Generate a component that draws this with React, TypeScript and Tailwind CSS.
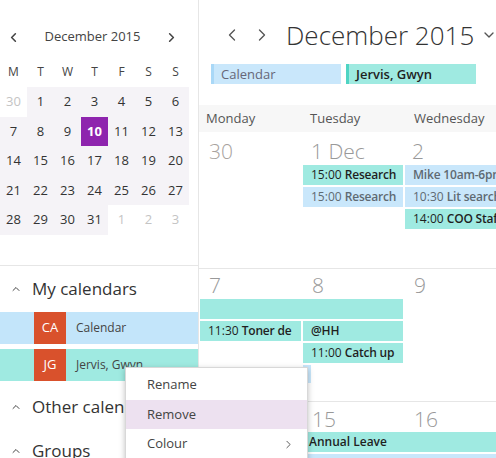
import { ChevronLeft, ChevronRight, ChevronUp, ChevronDown } from 'lucide-react';

const dayNames = ['M', 'T', 'W', 'T', 'F', 'S', 'S'];

// mini month grid: [label, inMonth]
const weeks: [string, boolean][][] = [
  [['30', false], ['1', true], ['2', true], ['3', true], ['4', true], ['5', true], ['6', true]],
  [['7', true], ['8', true], ['9', true], ['10', true], ['11', true], ['12', true], ['13', true]],
  [['14', true], ['15', true], ['16', true], ['17', true], ['18', true], ['19', true], ['20', true]],
  [['21', true], ['22', true], ['23', true], ['24', true], ['25', true], ['26', true], ['27', true]],
  [['28', true], ['29', true], ['30', true], ['31', true], ['1', false], ['2', false], ['3', false]],
];

function Ev({ time, title, kind }: { time?: string; title: string; kind: 'teal' | 'blue' }) {
  return (
    <div
      className={
        kind === 'teal'
          ? 'h-[20px] shrink-0 bg-[#9feae1] text-[#1f1f1f] text-[12px] leading-[20px] pl-[8px] whitespace-nowrap overflow-hidden'
          : 'h-[20px] shrink-0 bg-[#c9e7fb] text-[#5f6a72] text-[12px] leading-[20px] pl-[8px] whitespace-nowrap overflow-hidden'
      }
    >
      {time && <span>{time} </span>}
      <span className="font-semibold tracking-[-0.2px]">{title}</span>
    </div>
  );
}

function SectionHead({ label, h }: { label: string; h: string }) {
  return (
    <div className={`${h} shrink-0 flex items-center pl-[10px] text-[#333]`}>
      <ChevronUp size={12} strokeWidth={2} className="text-[#444]" />
      <span className="ml-[10px] text-[17px] whitespace-nowrap">{label}</span>
    </div>
  );
}

function CalRow({ initials, name, bg }: { initials: string; name: string; bg: string }) {
  return (
    <div className={`h-[32px] shrink-0 flex items-center ${bg}`}>
      <div className="ml-[34px] w-[32px] h-[32px] bg-[#d9512c] text-white text-[13px] flex items-center justify-center">
        {initials}
      </div>
      <span className="ml-[10px] text-[12px] text-[#444] whitespace-nowrap">{name}</span>
    </div>
  );
}

export default function App() {
  return (
    <div className="relative w-[496px] h-[458px] overflow-hidden bg-white flex font-['Open_Sans','Noto_Sans',sans-serif]">
      {/* left pane */}
      <div className="w-[199px] shrink-0 border-r border-[#e6e6e6] flex flex-col">
        <div className="mt-[27px] h-[20px] shrink-0 flex items-center justify-between pl-[6px] pr-[8px] text-[#444]">
          <ChevronLeft size={15} strokeWidth={2.5} />
          <span className="text-[13px] text-[#444]">December 2015</span>
          <ChevronRight size={15} strokeWidth={2.5} className="mr-[11px]" />
        </div>
        <div className="mt-[15px] h-[20px] shrink-0 grid grid-cols-[repeat(7,27px)] text-[12px] text-[#444]">
          {dayNames.map((d, i) => (
            <div key={i} className="flex items-center justify-center">{d}</div>
          ))}
        </div>
        <div className="mt-[5px] shrink-0 flex flex-col">
          {weeks.map((w, wi) => (
            <div key={wi} className="grid grid-cols-[repeat(7,27px)] h-[29.6px]">
              {w.map(([d, inMonth], di) => {
                const today = wi === 1 && di === 3;
                return (
                  <div
                    key={di}
                    className={
                      today
                        ? 'flex items-center justify-center bg-[#8e24ae] text-white font-bold text-[13px]'
                        : inMonth
                        ? 'flex items-center justify-center bg-[#f5f3f7] text-[#333] text-[13px]'
                        : 'flex items-center justify-center text-[#c4c4c4] text-[13px]'
                    }
                  >
                    {d}
                  </div>
                );
              })}
            </div>
          ))}
        </div>
        <div className="mt-[30px] shrink-0 border-t border-[#e6e6e6]" />
        <SectionHead label="My calendars" h="h-[46px]" />
        <CalRow initials="CA" name="Calendar" bg="bg-[#c3e5fa]" />
        <div className="h-[5px] shrink-0" />
        <CalRow initials="JG" name="Jervis, Gwyn" bg="bg-[#9feae1]" />
        <div className="h-[4px] shrink-0" />
        <SectionHead label="Other calendars" h="h-[44px]" />
        <SectionHead label="Groups" h="h-[44px]" />
      </div>

      {/* main pane */}
      <div className="flex-1 min-w-0 flex flex-col">
        <div className="mt-[15px] h-[40px] shrink-0 flex items-center text-[#555]">
          <ChevronLeft size={20} strokeWidth={1.6} className="ml-[23px] shrink-0" />
          <ChevronRight size={20} strokeWidth={1.6} className="ml-[10px] shrink-0" />
          <span className="ml-[14px] text-[26px] font-light text-[#333] whitespace-nowrap">December 2015</span>
          <ChevronDown size={16} strokeWidth={2} className="ml-[7px] shrink-0" />
        </div>
        <div className="mt-[9px] shrink-0 flex gap-[5px] pl-[12px]">
          <div className="w-[130px] h-[20px] shrink-0 bg-[#c9e7fb] border-l-[3px] border-[#a9d8f7] text-[13px] leading-[20px] pl-[7px] text-[#667]">
            Calendar
          </div>
          <div className="w-[130px] h-[20px] shrink-0 bg-[#9feae1] border-l-[3px] border-[#4fd4c3] text-[13px] leading-[20px] pl-[7px] text-[#1f1f1f] font-semibold">
            Jervis, Gwyn
          </div>
        </div>
        <div className="mt-[21px] h-[27px] shrink-0 bg-[#f7f7f7] grid grid-cols-[103px_102px_102px] text-[13px] text-[#555] items-center">
          <span className="pl-[7px]">Monday</span>
          <span className="pl-[8px]">Tuesday</span>
          <span className="pl-[10px] whitespace-nowrap">Wednesday</span>
        </div>

        {/* week 1 */}
        <div className="h-[136px] shrink-0 grid grid-cols-[101px_100px_100px] gap-x-[2px] pl-[1px]">
          <div>
            <div className="h-[33px] pl-[9px] pt-[6px] text-[21px] leading-[26px] font-light text-[#a8a29e]">30</div>
          </div>
          <div className="flex flex-col gap-[2px]">
            <div className="h-[31px] shrink-0 pl-[8px] pt-[6px] text-[21px] leading-[26px] font-light text-[#999]">1 Dec</div>
            <Ev time="15:00" title="Research" kind="teal" />
            <Ev time="15:00" title="Research" kind="blue" />
          </div>
          <div className="flex flex-col gap-[2px]">
            <div className="h-[31px] shrink-0 pl-[7px] pt-[6px] text-[21px] leading-[26px] font-light text-[#999]">2</div>
            <Ev title="Mike 10am-6pm" kind="blue" />
            <Ev time="10:30" title="Lit search" kind="blue" />
            <Ev time="14:00" title="COO Staff" kind="teal" />
          </div>
        </div>

        {/* week 2 */}
        <div className="h-[133px] shrink-0 border-t border-[#e6e6e6] pl-[1px] flex flex-col">
          <div className="h-[30px] shrink-0 grid grid-cols-[101px_100px_100px] gap-x-[2px] text-[21px] leading-[26px] font-light text-[#999]">
            <div className="pl-[9px] pt-[3px]">7</div>
            <div className="pl-[9px] pt-[3px]">8</div>
            <div className="pl-[9px] pt-[3px]">9</div>
          </div>
          <div className="w-[203px] h-[20px] shrink-0 bg-[#9feae1]" />
          <div className="mt-[2px] grid grid-cols-[101px_100px_100px] gap-x-[2px]">
            <div className="flex flex-col">
              <Ev time="11:30" title="Toner de" kind="teal" />
            </div>
            <div className="flex flex-col gap-[2px]">
              <Ev title="@HH" kind="teal" />
              <Ev time="11:00" title="Catch up" kind="teal" />
              <div className="w-[8px] h-[18px] bg-[#c9e7fb]" />
            </div>
          </div>
        </div>

        {/* week 3 */}
        <div className="flex-1 border-t border-[#e6e6e6] pl-[1px] flex flex-col">
          <div className="h-[30px] shrink-0 grid grid-cols-[101px_100px_100px] gap-x-[2px] text-[21px] leading-[26px] font-light text-[#999]">
            <div className="pl-[9px] pt-[4px]">14</div>
            <div className="pl-[9px] pt-[4px]">15</div>
            <div className="pl-[9px] pt-[4px]">16</div>
          </div>
          <div className="ml-[103px] h-[20px] shrink-0 bg-[#9feae1] text-[12px] leading-[20px] pl-[6px] font-semibold text-[#1f1f1f]">
            Annual Leave
          </div>
          <div className="mt-[2px] ml-[103px] h-[20px] shrink-0 bg-[#c9e7fb]" />
        </div>
      </div>

      {/* context menu */}
      <div className="absolute left-[125px] top-[367px] w-[183px] h-[100px] bg-white border border-[#d8d8d8] shadow-[0_2px_6px_rgba(0,0,0,0.25)] pt-[2px] text-[13px] text-[#444]">
        <div className="h-[30px] flex items-center pl-[21px]">Rename</div>
        <div className="h-[29px] flex items-center pl-[21px] bg-[#ede1f0]">Remove</div>
        <div className="h-[30px] flex items-center pl-[21px] justify-between pr-[12px]">
          <span>Colour</span>
          <ChevronRight size={13} strokeWidth={1.6} />
        </div>
      </div>
    </div>
  );
}
